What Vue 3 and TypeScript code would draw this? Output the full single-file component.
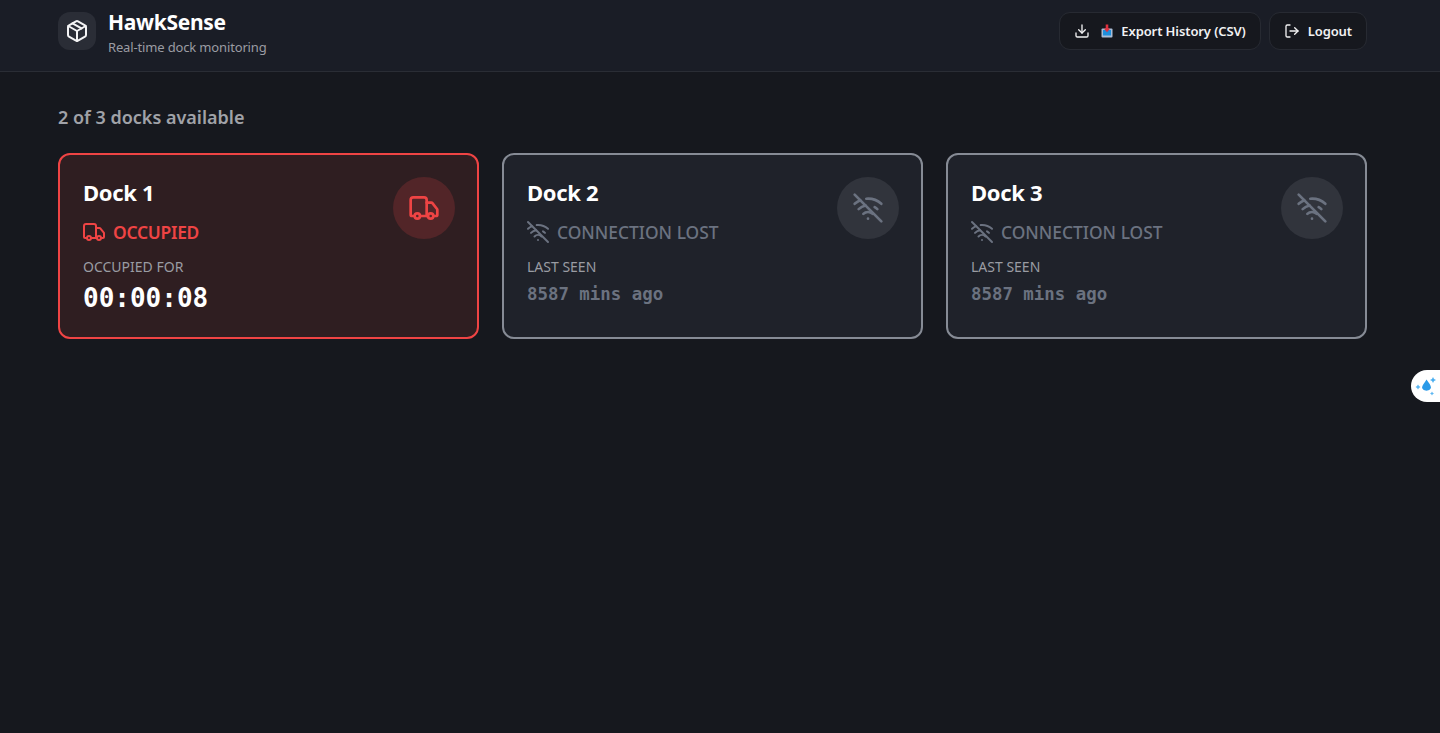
<script setup lang="ts">
interface Dock {
  name: string
  occupied: boolean
  status: string
  label: string
  value: string
}
const docks: Dock[] = [
  { name: 'Dock 1', occupied: true, status: 'OCCUPIED', label: 'OCCUPIED FOR', value: '00:00:08' },
  { name: 'Dock 2', occupied: false, status: 'CONNECTION LOST', label: 'LAST SEEN', value: '8587 mins ago' },
  { name: 'Dock 3', occupied: false, status: 'CONNECTION LOST', label: 'LAST SEEN', value: '8587 mins ago' },
]
</script>

<template>
  <div class="page">
    <header class="header">
      <div class="brand">
        <div class="logo">
          <svg class="ic" width="24" height="24" viewBox="0 0 24 24">
            <path d="M11 21.73a2 2 0 0 0 2 0l7-4A2 2 0 0 0 21 16V8a2 2 0 0 0-1-1.73l-7-4a2 2 0 0 0-2 0l-7 4A2 2 0 0 0 3 8v8a2 2 0 0 0 1 1.73z" />
            <path d="M12 22V12" />
            <polyline points="3.29 7 12 12 20.71 7" />
            <path d="m7.5 4.27 9 5.15" />
          </svg>
        </div>
        <div class="brand-text">
          <h1>HawkSense</h1>
          <p>Real-time dock monitoring</p>
        </div>
      </div>
      <div class="actions">
        <button class="btn export">
          <svg class="ic" width="16" height="16" viewBox="0 0 24 24">
            <path d="M12 15V3" />
            <path d="M21 15v4a2 2 0 0 1-2 2H5a2 2 0 0 1-2-2v-4" />
            <path d="m7 10 5 5 5-5" />
          </svg>
          <svg class="outbox" width="14" height="14" viewBox="0 0 14 14">
            <rect x="1.5" y="4.5" width="11" height="9" rx="1" fill="#a9bdd6" />
            <rect x="3" y="6" width="8" height="5.5" fill="#1f8fdc" />
            <path d="M7 0.5 L7 5" stroke="#e0313f" stroke-width="2.6" />
            <path d="M3.8 4.6 H10.2 L7 8.2 Z" fill="#e0313f" />
          </svg>
          <span>Export History (CSV)</span>
        </button>
        <button class="btn logout">
          <svg class="ic" width="16" height="16" viewBox="0 0 24 24">
            <path d="m16 17 5-5-5-5" />
            <path d="M21 12H9" />
            <path d="M9 21H5a2 2 0 0 1-2-2V5a2 2 0 0 1 2-2h4" />
          </svg>
          <span>Logout</span>
        </button>
      </div>
    </header>

    <main class="main">
      <h2 class="summary">2 of 3 docks available</h2>
      <div class="grid">
        <article v-for="d in docks" :key="d.name" class="card" :class="d.occupied ? 'occupied' : 'lost'">
          <div class="card-body">
            <h3>{{ d.name }}</h3>
            <div class="status">
              <svg v-if="d.occupied" class="ic" width="24" height="24" viewBox="0 0 24 24">
                <path d="M14 18V6a2 2 0 0 0-2-2H4a2 2 0 0 0-2 2v11a1 1 0 0 0 1 1h2" />
                <path d="M15 18H9" />
                <path d="M19 18h2a1 1 0 0 0 1-1v-3.65a1 1 0 0 0-.22-.624l-3.48-4.35A1 1 0 0 0 17.52 8H14" />
                <circle cx="17" cy="18" r="2" />
                <circle cx="7" cy="18" r="2" />
              </svg>
              <svg v-else class="ic" width="24" height="24" viewBox="0 0 24 24">
                <path d="M12 20h.01" />
                <path d="M8.5 16.429a5 5 0 0 1 7 0" />
                <path d="M5 12.859a10 10 0 0 1 5.17-2.69" />
                <path d="M19 12.859a10 10 0 0 0-2.007-1.523" />
                <path d="M2 8.82a15 15 0 0 1 4.177-2.643" />
                <path d="M22 8.82a15 15 0 0 0-11.288-3.764" />
                <path d="m2 2 20 20" />
              </svg>
              <span>{{ d.status }}</span>
            </div>
            <div class="label">{{ d.label }}</div>
            <div class="value">{{ d.value }}</div>
          </div>
          <div class="badge">
            <svg v-if="d.occupied" class="ic" width="32" height="32" viewBox="0 0 24 24">
              <path d="M14 18V6a2 2 0 0 0-2-2H4a2 2 0 0 0-2 2v11a1 1 0 0 0 1 1h2" />
              <path d="M15 18H9" />
              <path d="M19 18h2a1 1 0 0 0 1-1v-3.65a1 1 0 0 0-.22-.624l-3.48-4.35A1 1 0 0 0 17.52 8H14" />
              <circle cx="17" cy="18" r="2" />
              <circle cx="7" cy="18" r="2" />
            </svg>
            <svg v-else class="ic" width="32" height="32" viewBox="0 0 24 24">
              <path d="M12 20h.01" />
              <path d="M8.5 16.429a5 5 0 0 1 7 0" />
              <path d="M5 12.859a10 10 0 0 1 5.17-2.69" />
              <path d="M19 12.859a10 10 0 0 0-2.007-1.523" />
              <path d="M2 8.82a15 15 0 0 1 4.177-2.643" />
              <path d="M22 8.82a15 15 0 0 0-11.288-3.764" />
              <path d="m2 2 20 20" />
            </svg>
          </div>
        </article>
      </div>
    </main>

    <div class="widget">
      <svg width="24" height="24" viewBox="0 0 24 24">
        <path d="M12.5 5.5 C15 9 17 11 17 14 A5 5 0 0 1 8 14 C8 11 10.5 9 12.5 5.5 Z" fill="#2a9ae8" />
        <path d="M4 10.5 L5 12 L6.5 13 L5 14 L4 15.5 L3 14 L1.5 13 L3 12 Z" fill="#5db7f2" />
        <path d="M19 3 L20 5 L22 6 L20 7 L19 9 L18 7 L16 6 L18 5 Z" fill="#4aaef0" />
        <path d="M18 17.5 L18.7 18.8 L20 19.5 L18.7 20.2 L18 21.5 L17.3 20.2 L16 19.5 L17.3 18.8 Z" fill="#5db7f2" />
      </svg>
    </div>
  </div>
</template>

<style>
html,
body {
  margin: 0;
  background: #16181e;
}
</style>

<style scoped>
.page {
  position: relative;
  min-height: 733px;
  background: #16181e;
  font-family: "Noto Sans", "Open Sans", sans-serif;
  overflow: hidden;
}
.ic {
  fill: none;
  stroke: currentColor;
  stroke-width: 2;
  stroke-linecap: round;
  stroke-linejoin: round;
  flex: none;
}
.header {
  height: 72px;
  box-sizing: border-box;
  border-bottom: 1px solid #2a2d35;
  background: #1a1d26;
  display: flex;
  align-items: flex-start;
  justify-content: space-between;
  padding: 12px 73px 0 58px;
}
.brand {
  display: flex;
  align-items: flex-start;
  gap: 12px;
}
.logo {
  width: 38px;
  height: 38px;
  border-radius: 12px;
  background: #2a2d36;
  color: #f4f4f5;
  display: flex;
  align-items: center;
  justify-content: center;
}
.brand-text {
  margin-top: -2px;
}
.brand-text h1 {
  margin: 0;
  color: #fff;
  font-size: 21px;
  line-height: 24px;
  font-weight: 700;
  letter-spacing: -0.3px;
}
.brand-text p {
  margin: 3px 0 0;
  color: #9a9ca3;
  font-size: 13px;
  line-height: 20px;
  letter-spacing: -0.15px;
}
.actions {
  display: flex;
  gap: 8px;
}
.btn {
  height: 38px;
  display: flex;
  align-items: center;
  border: 1px solid #272a32;
  border-radius: 11px;
  background: #16181e;
  color: #f2f2f3;
  font-family: inherit;
  font-size: 13px;
  font-weight: 600;
  padding: 0 14px;
  letter-spacing: -0.1px;
}
.export {
  gap: 10px;
}
.export span {
  margin-left: -3px;
}
.logout {
  gap: 8px;
}
.main {
  padding: 31px 73px 0 58px;
}
.summary {
  margin: 0 0 22px;
  color: #a0a2a8;
  font-size: 18px;
  line-height: 28px;
  font-weight: 600;
}
.grid {
  display: grid;
  grid-template-columns: repeat(3, minmax(0, 1fr));
  gap: 23px;
}
.card {
  height: 186px;
  box-sizing: border-box;
  border: 2px solid;
  border-radius: 12px;
  padding: 23px;
  display: flex;
  justify-content: space-between;
  align-items: flex-start;
}
.occupied {
  border-color: #ef4444;
  background: #2f1e21;
}
.lost {
  border-color: #868b95;
  background: #1f222a;
}
.card h3 {
  margin: 0;
  color: #fff;
  font-size: 22px;
  line-height: 28px;
  font-weight: 700;
  letter-spacing: -0.3px;
}
.status {
  display: flex;
  align-items: center;
  gap: 7px;
  margin-top: 13px;
  font-size: 17.4px;
  line-height: 26px;
}
.status .ic {
  margin-left: -1px;
}
.occupied .status {
  color: #ef4444;
  font-weight: 600;
  letter-spacing: -0.25px;
}
.lost .status {
  color: #6b7280;
  font-weight: 500;
}
.label {
  margin-top: 12px;
  color: #9a9ca3;
  font-size: 14px;
  line-height: 20px;
}
.value {
  font-family: "DejaVu Sans Mono", "Liberation Mono", monospace;
  font-weight: 700;
}
.occupied .value {
  color: #fff;
  font-size: 26px;
  line-height: 32px;
  margin-top: 5px;
}
.lost .value {
  color: #6b7280;
  font-size: 17.4px;
  line-height: 26px;
  margin-top: 4px;
}
.badge {
  width: 62px;
  height: 62px;
  margin: -1px -1px 0 0;
  border-radius: 50%;
  display: flex;
  align-items: center;
  justify-content: center;
  flex: none;
}
.occupied .badge {
  background: #522528;
  color: #ef4444;
}
.lost .badge {
  background: #31343c;
  color: #6b7280;
}
.widget {
  position: absolute;
  left: 1411px;
  top: 370px;
  width: 50px;
  height: 32px;
  border-radius: 16px;
  background: #fff;
  display: flex;
  align-items: center;
  padding-left: 3px;
  box-sizing: border-box;
}
</style>
